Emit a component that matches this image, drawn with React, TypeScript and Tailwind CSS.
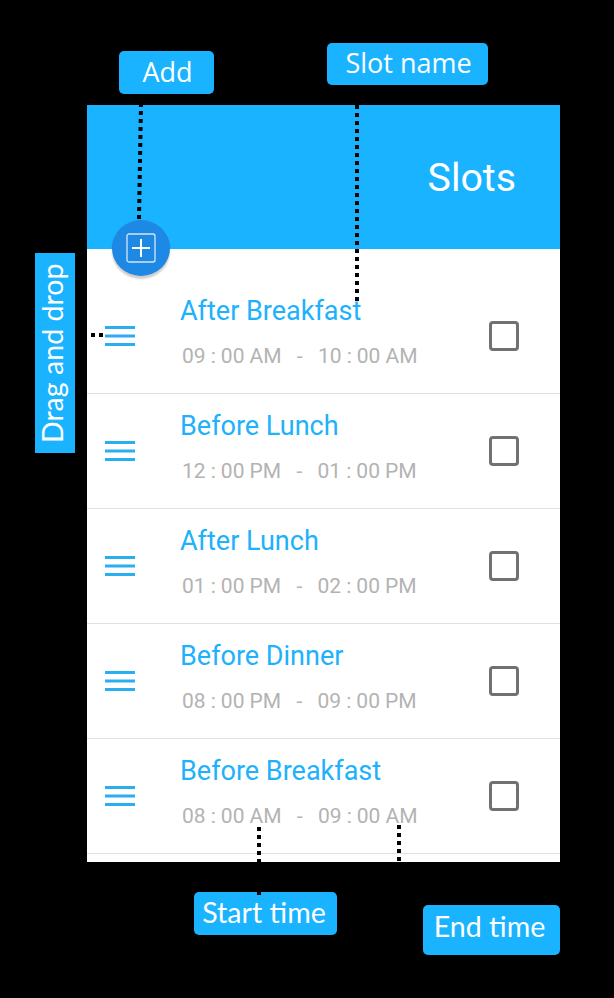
import React from 'react'

const slots = [
  { name: 'After Breakfast', start: '09 : 00 AM', end: '10 : 00 AM' },
  { name: 'Before Lunch', start: '12 : 00 PM', end: '01 : 00 PM' },
  { name: 'After Lunch', start: '01 : 00 PM', end: '02 : 00 PM' },
  { name: 'Before Dinner', start: '08 : 00 PM', end: '09 : 00 PM' },
  { name: 'Before Breakfast', start: '08 : 00 AM', end: '09 : 00 AM' },
]

function DragHandle() {
  return (
    <svg width="30" height="20" viewBox="0 0 30 20" className="mt-[47px] shrink-0">
      <path d="M0 1.5H30M0 10H30M0 18.5H30" stroke="#29aeef" strokeWidth="3.2" />
    </svg>
  )
}

function SlotRow({ name, start, end }: { name: string; start: string; end: string }) {
  return (
    <div className="flex h-[115px] shrink-0 items-start border-b border-[#e0e0e0] pl-[18px] pr-[41px]">
      <DragHandle />
      <div className="ml-[45px] flex-1 whitespace-pre">
        <div className="mt-4 h-8 text-[27px] leading-8 text-[#20b1fc]">{name}</div>
        <div className="mt-[15px] ml-0.5 text-[21px] leading-7 text-[#b3b3b3] [word-spacing:-0.12px]">{`${start}   -   ${end}`}</div>
      </div>
      <div className="mt-[42px] size-[30px] shrink-0 rounded-[4px] border-3 border-[#717171]" />
    </div>
  )
}

function Phone() {
  return (
    <div className="flex h-[757px] w-[473px] flex-col overflow-hidden bg-white font-[Roboto,sans-serif]">
      <div className="relative flex h-36 shrink-0 items-center justify-end bg-[#1ab3ff] pr-[44px] pt-[3px]">
        <h1 className="text-[39.3px] leading-none text-white">Slots</h1>
        {/* add button hangs over the bottom edge of the header */}
        <div className="absolute left-[25px] top-[115px] flex h-[56px] w-[58px] items-center justify-center rounded-[50%] bg-[#1e88e5] shadow-[0_3px_2px_rgba(0,0,0,0.2)]">
          <svg width="30" height="30" viewBox="0 0 30 30" fill="none" stroke="white" className="mr-px">
            <rect x="1" y="1" width="28" height="28" rx="2" strokeWidth="1.3" opacity="0.8" />
            <path d="M15 6V24M6 15H24" strokeWidth="2" />
          </svg>
        </div>
      </div>
      <div className="flex flex-col pt-[30px]">
        {slots.map((slot) => (
          <SlotRow key={slot.name} {...slot} />
        ))}
      </div>
    </div>
  )
}

// dotted leaders from every label to its part of the screen
function Leaders() {
  return (
    <svg
      className="pointer-events-none absolute inset-0"
      width="614"
      height="998"
      viewBox="0 0 614 998"
      stroke="black"
      strokeWidth="4"
      strokeDasharray="4 4"
    >
      <path d="M141 103L139 219" />
      <path d="M357 105V301" />
      <path d="M91 335H103" />
      <path d="M259 827V895" />
      <path d="M399 825V862" />
    </svg>
  )
}

function App() {
  return (
    <div className="relative flex h-[998px] w-[614px] flex-col overflow-hidden bg-black font-[Lato,sans-serif] text-[28.6px] text-white">
      <div className="flex h-[105px] shrink-0 items-start pl-[119px] font-['Open_Sans',sans-serif] text-[27px]">
        <div className="mt-[51px] flex h-[43px] w-[95px] items-center justify-center rounded-[5px] bg-[#1ab3ff] pb-px pl-0.5">
          Add
        </div>
        <div className="ml-[113px] mt-[43px] flex h-[42px] w-[161px] items-center justify-center rounded-[5px] bg-[#1ab3ff] pb-0.5 pl-0.5">
          Slot name
        </div>
      </div>

      <div className="flex shrink-0 items-start pl-[35px]">
        <div className="mr-3 mt-[148px] flex h-[200px] w-10 rotate-180 items-center justify-center bg-[#1ab3ff] pl-[5px] [writing-mode:vertical-rl]">
          Drag and drop
        </div>
        <Phone />
      </div>

      <div className="flex items-start pl-[194px]">
        <div className="mt-[30px] flex h-[43px] w-[143px] items-center justify-center rounded-[5px] bg-[#1ab3ff] pb-0.5 pr-[3px]">
          Start time
        </div>
        <div className="ml-[86px] mt-[43px] flex h-[50px] w-[137px] items-center justify-center rounded-[5px] bg-[#1ab3ff] pb-[7px] pr-1">
          End time
        </div>
      </div>

      <Leaders />
    </div>
  )
}

export default App
